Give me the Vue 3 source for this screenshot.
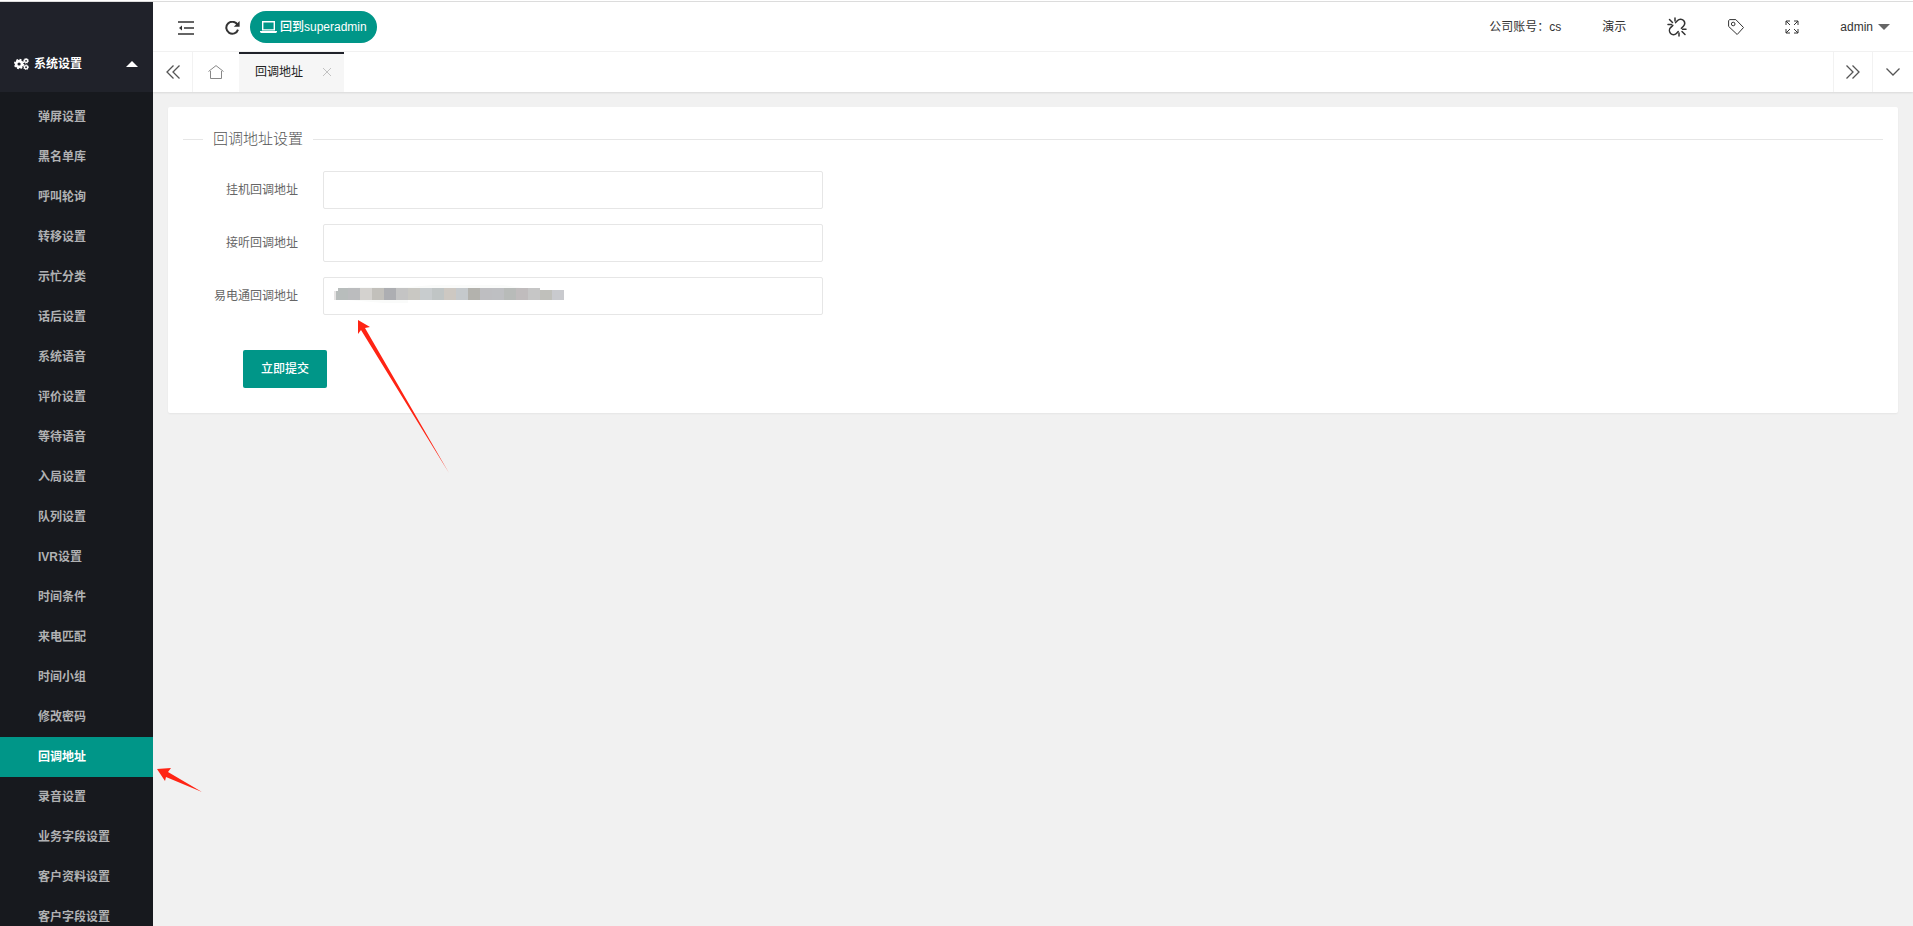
<template>
  <div class="layout">
    <aside class="side">
      <div class="side-head">
        <a href="#" class="side-title" @click.prevent="abierto = !abierto">
          <svg class="icon-cogs" viewBox="0 0 28 22" fill="none" stroke="currentColor">
            <circle cx="9.500" cy="11" r="5.500" stroke-width="5" />
            <circle cx="9.500" cy="11" r="8.200" stroke-width="3" stroke-dasharray="3.400 3.040" />
            <circle cx="22.500" cy="5" r="3" stroke-width="2.600" />
            <circle cx="22.500" cy="5" r="4.600" stroke-width="1.600" stroke-dasharray="1.900 1.710" />
            <circle cx="22.500" cy="17" r="3" stroke-width="2.600" />
            <circle cx="22.500" cy="17" r="4.600" stroke-width="1.600" stroke-dasharray="1.900 1.710" />
          </svg>
          <span>系统设置</span>
          <i class="caret up"></i>
        </a>
      </div>
      <nav v-show="abierto" class="menu">
        <a
          v-for="item in menu"
          :key="item"
          href="#"
          :class="{ active: item === actual }"
          @click.prevent="actual = item"
        >{{ item }}</a>
      </nav>
    </aside>

    <div class="body">
      <header class="header">
        <div class="header-left">
          <button type="button" class="icon-btn toggle" aria-label="菜单">
            <svg width="16" height="14" viewBox="0 0 16 14" fill="none" stroke="currentColor" stroke-width="1.4">
              <path d="M0 1h16M6 7h10M0 13h16" />
              <path d="M4 4.6v4.8L1 7z" fill="currentColor" stroke="none" />
            </svg>
          </button>
          <button type="button" class="icon-btn refresh" aria-label="刷新">
            <svg width="15" height="14" viewBox="0 0 15 14" fill="none" stroke="currentColor" stroke-width="2">
              <path d="M12.4 3.6A6 6 0 1 0 13 8.6" />
              <path d="M14.6 0v5.8H8.8z" fill="currentColor" stroke="none" />
            </svg>
          </button>
          <button type="button" class="pill">
            <svg width="17" height="12" viewBox="0 0 17 12" fill="none" stroke="currentColor">
              <path d="M2.7 .7h11.6v8.2H2.7z" stroke-width="1.4" />
              <path d="M0 10h17v1l-1 1H1l-1-1z" fill="currentColor" stroke="none" />
            </svg>
            <span>回到superadmin</span>
          </button>
        </div>
        <div class="header-right">
          <a href="#">公司账号：cs</a>
          <a href="#">演示</a>
          <a href="#" aria-label="断开">
            <svg width="20" height="20" viewBox="0 0 20 20" fill="none" stroke="currentColor" stroke-width="1.5" stroke-linecap="round">
              <path d="M8.6 5.6l2-2.2a4 4 0 0 1 6 .2 4.2 4.2 0 0 1-.2 5.6l-2 2" />
              <path d="M5.8 8.4l-2.2 2.2a4.2 4.2 0 0 0 0 5.8 4 4 0 0 0 5.8 0l1.8-1.8" />
              <path d="M8 1v3M2.5 2.5l3 3M1 7.5h3.5M12 19v-3M18 17.5l-3-3M19 12.2h-3.5" />
            </svg>
          </a>
          <a href="#" aria-label="便签">
            <svg width="16" height="16" viewBox="0 0 16 16" fill="none" stroke="currentColor">
              <path d="M.6 1.8L1.5 .6h6.3l7.7 7.9-6.3 7L.6 7.4z" stroke-linejoin="round" />
              <circle cx="5.2" cy="5" r="1.8" />
            </svg>
          </a>
          <a href="#" aria-label="全屏">
            <svg width="14" height="14" viewBox="0 0 14 14" fill="none" stroke="currentColor">
              <path d="M1 5V1h4M1 1l4 4M9 1h4v4M13 1L9 5M1 9v4h4M1 13l4-4M13 9v4H9M13 13L9 9" />
            </svg>
          </a>
          <a href="#" class="user">admin<i class="caret down"></i></a>
        </div>
      </header>

      <div class="tabs">
        <button type="button" class="tab-ctl" aria-label="上一页">
          <svg width="14" height="14" viewBox="0 0 14 14" fill="none" stroke="currentColor" stroke-width="1.3">
            <path d="M7.5 .5L1 7l6.5 6.5M13.5 .5L7 7l6.5 6.5" />
          </svg>
        </button>
        <button type="button" class="tab-home" aria-label="首页">
          <svg width="16" height="14" viewBox="0 0 16 14" fill="none" stroke="currentColor">
            <path d="M.5 6.5L8 .6l7.5 5.9M2.5 6v7.5h11V6" />
          </svg>
        </button>
        <div class="tab">
          <span>{{ actual }}</span>
          <button type="button" class="tab-close" aria-label="关闭">
            <svg width="8" height="8" viewBox="0 0 8 8" stroke="currentColor"><path d="M0 0l8 8M8 0L0 8" /></svg>
          </button>
        </div>
        <button type="button" class="tab-ctl next" aria-label="下一页">
          <svg width="14" height="14" viewBox="0 0 14 14" fill="none" stroke="currentColor" stroke-width="1.3">
            <path d="M.5 .5L7 7 .5 13.5M6.5 .5L13 7l-6.5 6.5" />
          </svg>
        </button>
        <button type="button" class="tab-ctl more" aria-label="更多">
          <svg width="14" height="8" viewBox="0 0 14 8" fill="none" stroke="currentColor" stroke-width="1.3">
            <path d="M.5 .5L7 7 13.5 .5" />
          </svg>
        </button>
      </div>

      <main class="content">
        <form class="card" @submit.prevent>
          <fieldset>
            <legend>回调地址设置</legend>
          </fieldset>
          <div v-for="campo in campos" :key="campo.id" class="form-item">
            <label :for="campo.id">{{ campo.label }}</label>
            <div class="input-wrap">
              <input :id="campo.id" v-model="campo.valor" type="text" />
              <svg v-if="campo.oculto" class="mosaic" width="230" height="20" viewBox="0 0 230 20">
                <path d="M14 3h60l25-2h70l20 3v3H14zM14 15h60v4H50l-36-3z" fill="#fafbfa" />
                <rect y="7" width="2" height="9" fill="#e6e4e4" />
                <rect x="2" y="7" width="12" height="9" :fill="mosaico[0]" />
                <rect x="4" y="4" width="10" height="12" :fill="mosaico[0]" />
                <rect
                  v-for="(color, i) in mosaico.slice(1)"
                  :key="i"
                  :x="14 + i * 12"
                  :y="i > 15 ? 6 : 4"
                  width="12"
                  :height="i > 15 ? 10 : 12"
                  :fill="color"
                />
              </svg>
            </div>
          </div>
          <button type="submit" class="submit">立即提交</button>
        </form>
      </main>
    </div>

    <svg class="arrow arrow-field" width="92" height="154" viewBox="0 0 92 154" fill="#ff2414">
      <path d="M0 0L12 7 7 8 91 153 3 10 0 14z" />
    </svg>
    <svg class="arrow arrow-menu" width="46" height="24" viewBox="0 0 46 24" fill="#ff2414">
      <path d="M0 1L14 0 11 4 45 24 9 9 8 13z" />
    </svg>
  </div>
</template>

<script setup>
import { ref, reactive } from 'vue'

const abierto = ref(true)
const actual = ref('回调地址')

const menu = [
  '弹屏设置', '黑名单库', '呼叫轮询', '转移设置', '示忙分类', '话后设置', '系统语音',
  '评价设置', '等待语音', '入局设置', '队列设置', 'IVR设置', '时间条件', '来电匹配',
  '时间小组', '修改密码', '回调地址', '录音设置', '业务字段设置', '客户资料设置', '客户字段设置'
]

const campos = reactive([
  { id: 'hangup', label: '挂机回调地址', valor: '' },
  { id: 'answer', label: '接听回调地址', valor: '' },
  { id: 'ydt', label: '易电通回调地址', valor: '', oculto: true }
])

// colores del valor pixelado
const mosaico = [
  '#b8bdbc', '#bbbcbe', '#d4d2cf', '#c2c0bb', '#adaeb2', '#c4c4c4', '#c9c8c3',
  '#c8ccce', '#c0c5c5', '#cdc8c2', '#c5c9cc', '#b3b2ad', '#bebec1', '#bebfc2',
  '#b8bbb9', '#c0bcbd', '#c6c6c6', '#c0c0bb', '#c9cace'
]
</script>

<style>
body {
  margin: 0;
  background: #f1f1f1;
}
</style>

<style scoped>
.layout {
  position: relative;
  display: flex;
  box-sizing: border-box;
  height: 100vh;
  overflow: hidden;
  padding-top: 2px;
  background: linear-gradient(#fff 1px, #dcdcdc 1px, #dcdcdc 2px, #f1f1f1 2px);
  color: #333;
  font: 12px/20px "Liberation Sans", "Noto Sans CJK SC", sans-serif;
}
a {
  color: inherit;
  text-decoration: none;
}
button {
  display: flex;
  align-items: center;
  justify-content: center;
  padding: 0;
  border: none;
  background: none;
  color: inherit;
  font: inherit;
  cursor: pointer;
}
.caret {
  border: 6px solid transparent;
}
.caret.up {
  margin-left: auto;
  border-top: none;
  border-bottom-color: #fff;
}
.caret.down {
  margin-left: 5px;
  border-bottom: none;
  border-top-color: #666;
}

.side {
  flex: none;
  width: 153px;
  overflow: hidden;
  background: #17191e;
  font-weight: bold;
}
.side-head {
  padding-top: 34px;
  background: #20222a;
}
.side-title {
  display: flex;
  align-items: center;
  height: 56px;
  padding: 0 15px 0 14px;
  color: #fff;
}
.icon-cogs {
  width: 15px;
  height: 12px;
  margin-right: 5px;
}
.menu {
  padding: 5px 0;
}
.menu a {
  display: block;
  padding: 1px 0 0 38px;
  line-height: 39px;
  color: #b0b1b3;
}
.menu a.active {
  background: #009688;
  color: #fff;
}

.body {
  flex: 1;
  min-width: 0;
}
.header {
  display: flex;
  justify-content: space-between;
  height: 49px;
  border-bottom: 1px solid #f2f2f2;
  background: #fff;
}
.header-left,
.header-right,
.header-right a {
  display: flex;
  align-items: center;
}
.header-left .toggle {
  margin: 2px 0 0 25px;
}
.header-left .refresh {
  margin: 2px 10px 0 31px;
}
.pill {
  height: 32px;
  padding: 0 10px;
  gap: 3px;
  border-radius: 16px;
  background: #009688;
  color: #fff;
  font-weight: 500;
}
.header-right {
  gap: 1px;
  padding-right: 3px;
}
.header-right a {
  height: 49px;
  padding: 0 20px;
}

.tabs {
  display: flex;
  height: 40px;
  background: #fff;
  box-shadow: 0 1px 2px rgba(0, 0, 0, 0.1);
  color: #555;
}
.tab-ctl {
  width: 40px;
  border-right: 1px solid #f2f2f2;
}
.tab-ctl.next {
  margin-left: auto;
  border-left: 1px solid #f2f2f2;
}
.tab-ctl.more {
  border-right: none;
}
.tab-home {
  width: 46px;
  color: #888;
}
.tab {
  display: flex;
  align-items: center;
  box-sizing: border-box;
  width: 105px;
  padding: 0 13px 2px 16px;
  justify-content: space-between;
  border-top: 2px solid #20222a;
  background: #f6f6f6;
  color: #222;
}
.tab-close {
  color: #c2c2c2;
}

.content {
  padding: 15px;
}
.card {
  padding: 15px 15px 25px;
  border-radius: 2px;
  background: #fff;
  box-shadow: 0 1px 2px rgba(0, 0, 0, 0.05);
}
fieldset {
  margin: 7px 0 22px;
  padding: 0;
  border: none;
  border-top: 1px solid #e6e6e6;
}
legend {
  margin-left: 20px;
  padding: 0 10px;
  font-size: 15px;
  font-weight: 300;
  color: #555;
}
.form-item {
  display: flex;
  margin-bottom: 15px;
}
.form-item label {
  width: 115px;
  margin-right: 25px;
  line-height: 38px;
  text-align: right;
  color: #666;
}
.input-wrap {
  position: relative;
  width: 500px;
}
.input-wrap input {
  box-sizing: border-box;
  width: 100%;
  height: 38px;
  padding: 0 10px;
  border: 1px solid #e6e6e6;
  border-radius: 2px;
  outline: none;
  font: inherit;
}
.mosaic {
  position: absolute;
  top: 7px;
  left: 11px;
  pointer-events: none;
}
.submit {
  height: 38px;
  margin: 35px 0 0 60px;
  padding: 0 18px;
  border-radius: 2px;
  background: #009688;
  color: #fff;
  font-weight: 500;
}

.arrow {
  position: absolute;
  pointer-events: none;
}
.arrow-field {
  top: 320px;
  left: 358px;
}
.arrow-menu {
  top: 768px;
  left: 157px;
}
</style>
